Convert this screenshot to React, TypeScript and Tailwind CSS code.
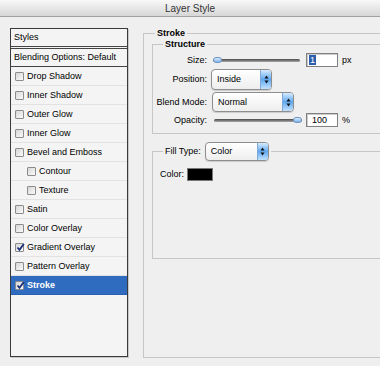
import React from "react";

function Check({ checked }: { checked?: boolean }) {
  return (
    <span className="relative flex h-[9px] w-[9px] shrink-0 items-center justify-center rounded-[1px] border border-[#8c8c8c] bg-gradient-to-br from-[#d6d6d6] to-[#fbfbfb]">
      {checked && (
        <svg width="9" height="9" viewBox="0 0 9 9" className="absolute -top-[1px] left-0">
          <path d="M1.5 4.5 L3.5 6.8 L7.8 1" stroke="#1a2f7a" strokeWidth="1.8" fill="none" />
        </svg>
      )}
    </span>
  );
}

function Row({ label, checked, indent, active }: { label: string; checked?: boolean; indent?: boolean; active?: boolean }) {
  return (
    <div
      className={
        active
          ? "flex h-[19px] items-center gap-[3px] border-b border-[#2a5fb0] bg-[#2f6cc0] pl-[4px] font-bold text-white"
          : indent
          ? "flex h-[19px] items-center gap-[3px] border-b border-[#e2e2e2] pl-[16px]"
          : "flex h-[19px] items-center gap-[3px] border-b border-[#e2e2e2] pl-[4px]"
      }
    >
      <Check checked={checked} />
      <span>{label}</span>
    </div>
  );
}

function Select({ value, width, height }: { value: string; width: string; height: string }) {
  return (
    <div className={`flex ${width} ${height} items-stretch overflow-hidden rounded-[4px] border border-[#8e8e8e] bg-gradient-to-b from-white to-[#eeeeee] shadow-[0_1px_1px_rgba(0,0,0,0.15)]`}>
      <span className="flex flex-1 items-center pl-[5px] text-[9px]">{value}</span>
      <span className="flex w-[11px] items-center justify-center border-l border-[#7ea9d8] bg-gradient-to-b from-[#d6ecff] via-[#5fa8ef] to-[#c3e2ff]">
        <svg width="5" height="9" viewBox="0 0 5 9">
          <path d="M2.5 0.5 L4.5 3.5 L0.5 3.5 Z" fill="#111" />
          <path d="M2.5 8.5 L4.5 5.5 L0.5 5.5 Z" fill="#111" />
        </svg>
      </span>
    </div>
  );
}

function Slider({ width, pos }: { width: string; pos: "start" | "end" }) {
  return (
    <div className={`relative ${width} h-[3px] rounded-full bg-gradient-to-b from-[#4a4a4a] to-[#a8a8a8]`}>
      <span
        className={
          pos === "start"
            ? "absolute -top-[2px] left-0 h-[6px] w-[9px] rounded-full border border-[#6f95c4] bg-gradient-to-b from-[#d8ebff] to-[#7bb2ea]"
            : "absolute -top-[2px] right-0 h-[6px] w-[9px] rounded-full border border-[#6f95c4] bg-gradient-to-b from-[#d8ebff] to-[#7bb2ea]"
        }
      />
    </div>
  );
}

export default function App() {
  const rows: { label: string; checked?: boolean; indent?: boolean; active?: boolean }[] = [
    { label: "Drop Shadow" },
    { label: "Inner Shadow" },
    { label: "Outer Glow" },
    { label: "Inner Glow" },
    { label: "Bevel and Emboss" },
    { label: "Contour", indent: true },
    { label: "Texture", indent: true },
    { label: "Satin" },
    { label: "Color Overlay" },
    { label: "Gradient Overlay", checked: true },
    { label: "Pattern Overlay" },
    { label: "Stroke", checked: true, active: true },
  ];
  return (
    <div className="h-[366px] w-[380px] overflow-hidden bg-[#efefef] font-['Liberation_Sans',Arial,sans-serif] text-[9px] leading-[11px] text-black">
      <div className="flex h-[17px] items-center justify-center border-b border-[#a0a0a0] bg-gradient-to-b from-[#f8f8f8] to-[#d7d7d7] text-[10px] text-[#333]">
        Layer Style
      </div>
      <div className="flex pl-[10px] pt-[11px]">
        <div className="h-[329px] w-[118px] shrink-0 border border-[#3a3a3a] bg-[#f4f4f4] shadow-[1px_1px_0_#c8c8c8]">
          <div className="flex h-[18px] items-center border-b border-[#444] pl-[3px]">Styles</div>
          <div className="mt-[1px] flex h-[19px] items-center border-y border-[#444] pl-[3px]">Blending Options: Default</div>
          {rows.map((r) => (
            <Row key={r.label} {...r} />
          ))}
        </div>
        <fieldset className="ml-[15px] h-[330px] w-[260px] shrink-0 border border-[#c6c6c6] px-[8px]">
          <legend className="ml-[3px] px-[2px] text-[9px] font-bold leading-[11px]">Stroke</legend>
          <fieldset className="h-[95px] border border-[#c6c6c6]">
            <legend className="ml-[10px] px-[2px] font-bold leading-[11px]">Structure</legend>
            <div className="mt-[3px] flex h-[14px] items-center">
              <span className="w-[54px] text-right">Size:</span>
              <span className="ml-[6px]"><Slider width="w-[87px]" pos="start" /></span>
              <span className="ml-[6px] flex h-[14px] w-[32px] items-center border border-[#808080] bg-white pl-[2px] shadow-[inset_1px_1px_0_#ccc]">
                <span className="bg-[#2c5eb0] px-[1px] leading-[10px] text-white">1</span>
              </span>
              <span className="ml-[4px]">px</span>
            </div>
            <div className="mt-[2px] flex h-[21px] items-center">
              <span className="w-[54px] text-right">Position:</span>
              <span className="ml-[4px]"><Select value="Inside" width="w-[61px]" height="h-[21px]" /></span>
            </div>
            <div className="mt-[2px] flex h-[20px] items-center">
              <span className="w-[54px] text-right">Blend Mode:</span>
              <span className="ml-[5px]"><Select value="Normal" width="w-[82px]" height="h-[20px]" /></span>
            </div>
            <div className="mt-[1px] flex h-[14px] items-center">
              <span className="w-[54px] text-right">Opacity:</span>
              <span className="ml-[7px]"><Slider width="w-[88px]" pos="end" /></span>
              <span className="ml-[4px] flex h-[14px] w-[32px] items-center border border-[#808080] bg-white pl-[5px] shadow-[inset_1px_1px_0_#ccc]">100</span>
              <span className="ml-[4px]">%</span>
            </div>
          </fieldset>
          <fieldset className="mt-[8px] h-[117px] border border-[#c6c6c6]">
            <legend className="ml-[10px] flex items-center px-[2px]">
              <span>Fill Type:</span>
              <span className="ml-[4px]"><Select value="Color" width="w-[64px]" height="h-[19px]" /></span>
            </legend>
            <div className="mt-[7px] flex h-[13px] items-center pl-[7px]">
              <span>Color:</span>
              <span className="ml-[3px] h-[13px] w-[26px] border border-[#777] bg-black" />
            </div>
          </fieldset>
        </fieldset>
      </div>
    </div>
  );
}
